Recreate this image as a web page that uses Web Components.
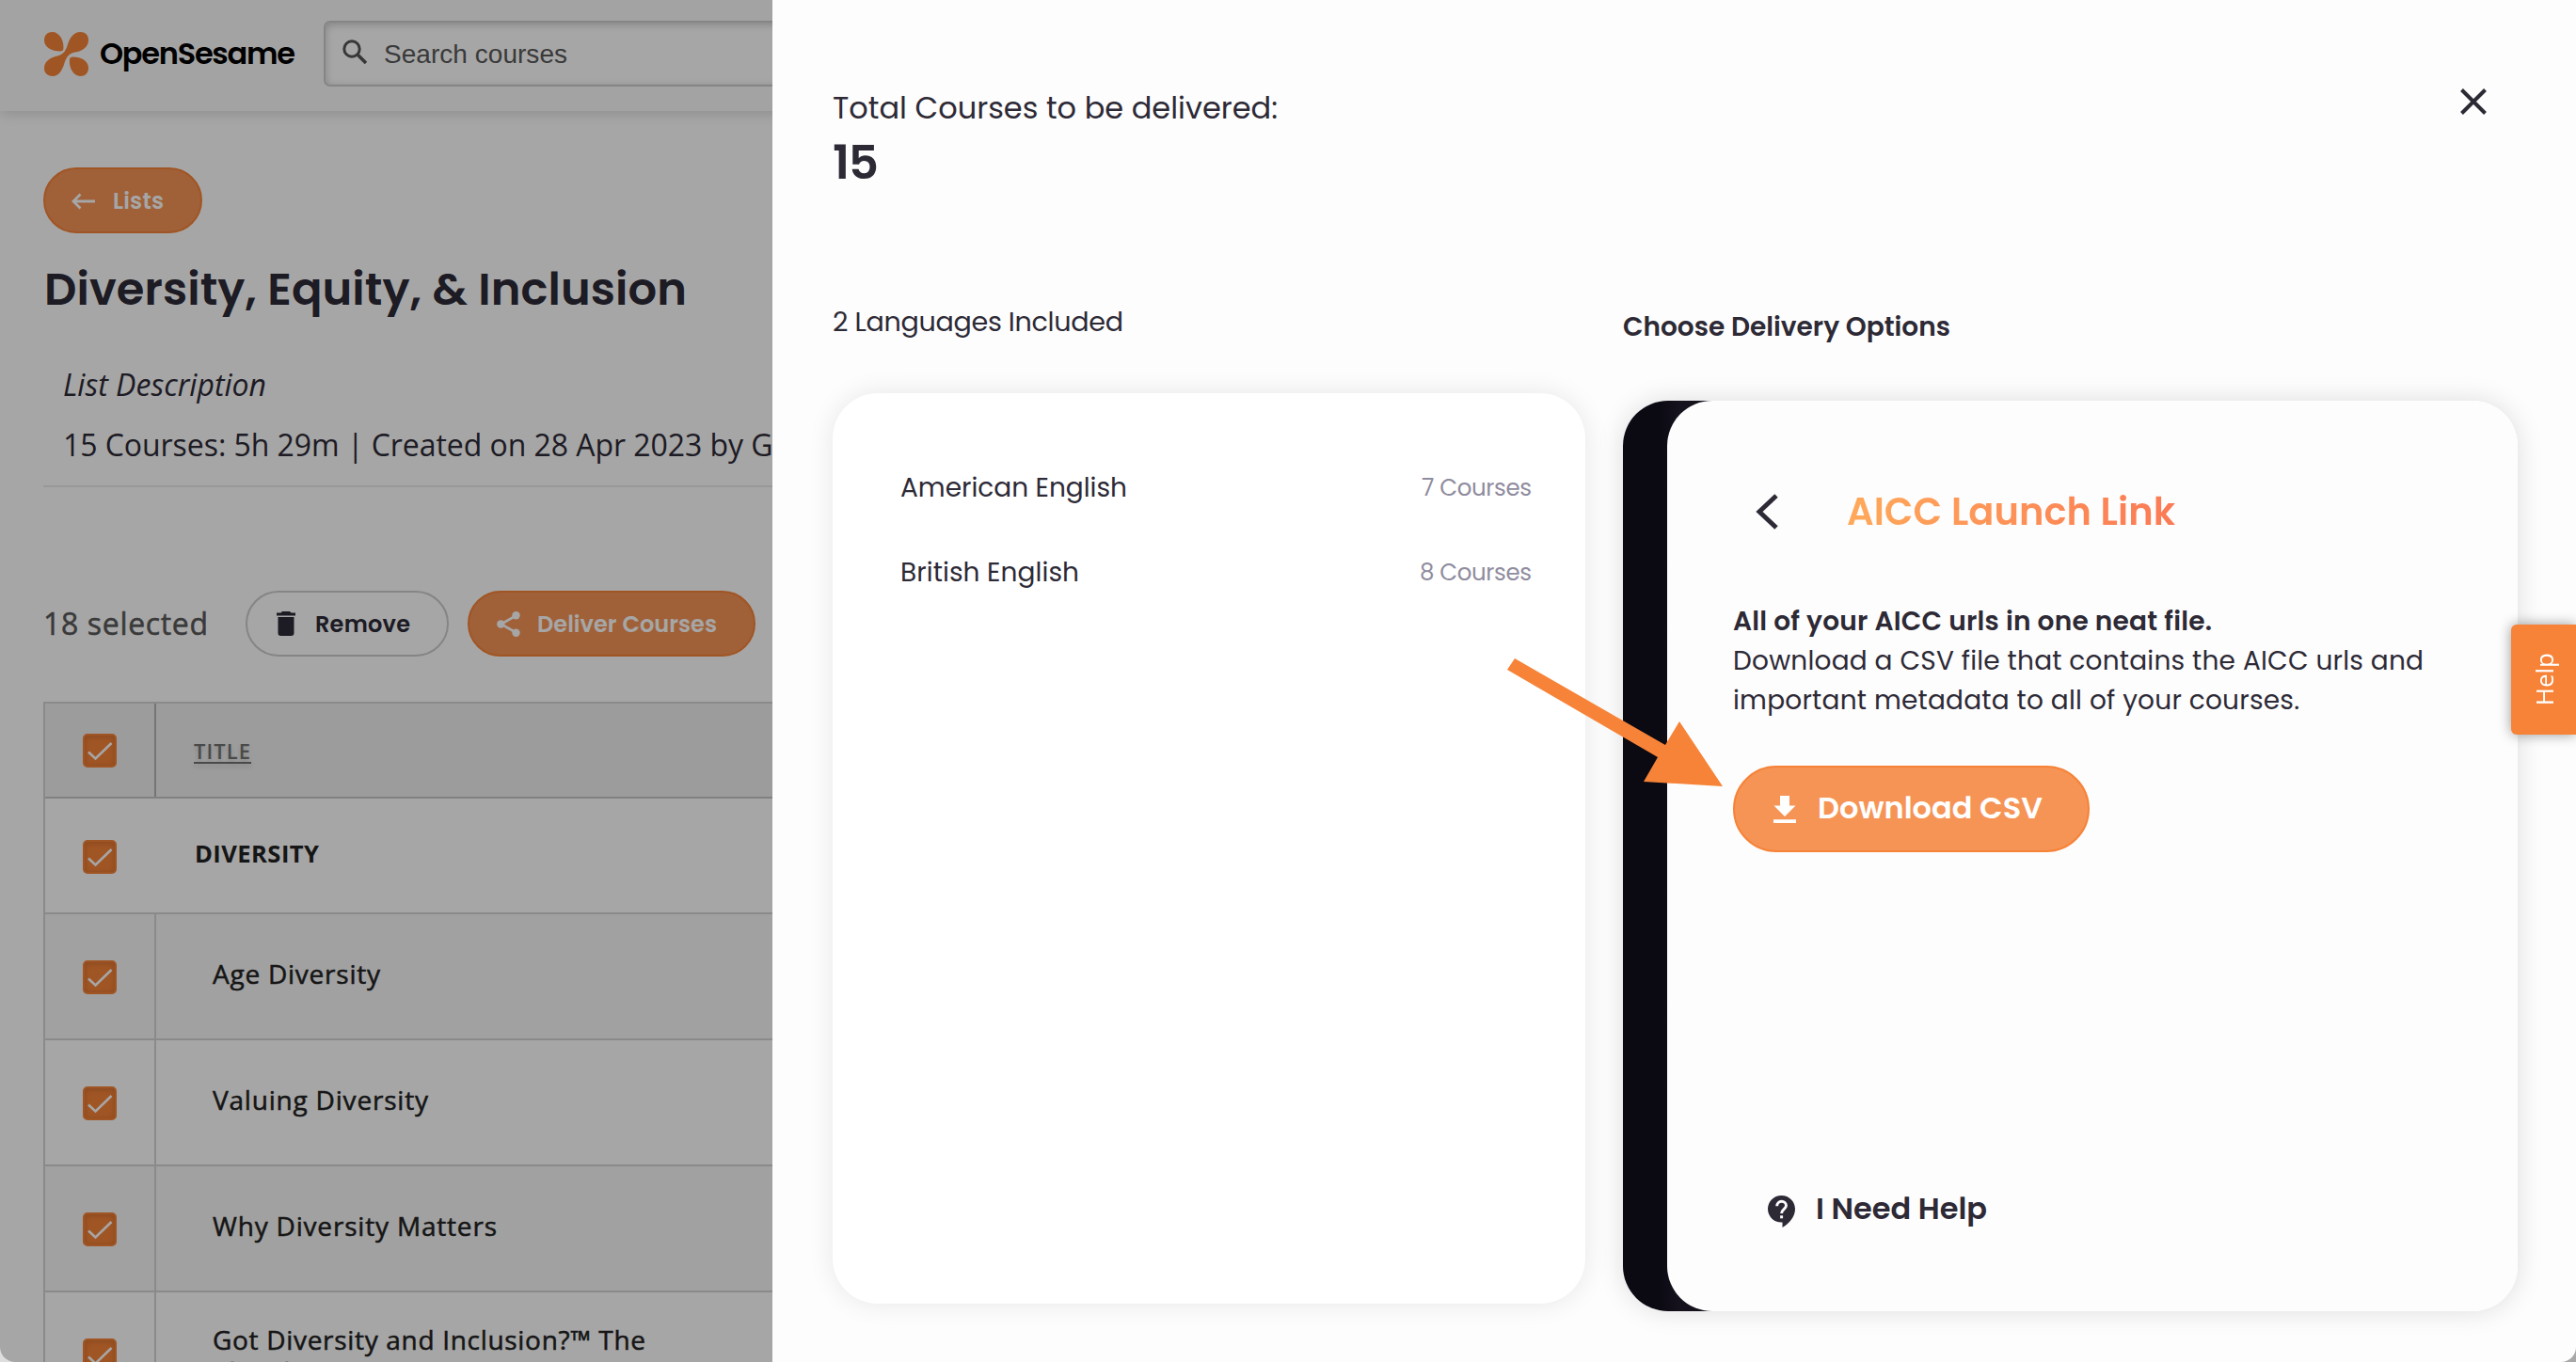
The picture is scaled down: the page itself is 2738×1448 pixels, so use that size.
<!DOCTYPE html>
<html lang="en">
<head>
<meta charset="utf-8">
<title>OpenSesame</title>
<style>
  html, body {
    margin: 0;
    height: 100%;
    overflow: hidden;
    background: linear-gradient(90deg, #dedede 50%, #a8a8a8 50%);
    font-family: Poppins, Inter, sans-serif;
    color: #2d2a36;
  }
</style>
</head>
<body>
<app-shell>
  <top-bar slot="page"></top-bar>
  <list-page slot="page"></list-page>
  <delivery-drawer slot="drawer">
    <language-row slot="languages" name="American English" w="241" count="7 Courses" cw="117"></language-row>
    <language-row slot="languages" name="British English" w="190" count="8 Courses" cw="119"></language-row>
  </delivery-drawer>
  <pointer-arrow slot="over"></pointer-arrow>
  <help-tab slot="over">Help</help-tab>
</app-shell>

<script>
/**
 * Creates a template element from a string.
 *
 * @param {string} html - The markup and styles.
 * @returns {HTMLTemplateElement} The template.
 */
const createTemplate = (html) => {
  const template = document.createElement('template')
  template.innerHTML = html
  return template
}

/**
 * Defines an element that only clones its template.
 *
 * @param {string} name - The tag name.
 * @param {string} html - The markup and styles.
 */
const defineStatic = (name, html) => {
  const template = createTemplate(html)
  customElements.define(name,
    class extends HTMLElement {
      /**
       * Creates an instance of the current type.
       */
      constructor () {
        super()
        this.attachShadow({ mode: 'open' })
          .appendChild(template.content.cloneNode(true))
      }
    }
  )
}

// The page, the dimming layer and the drawer on top of it.
defineStatic('app-shell', `
<style>
  :host {
    display: block;
    position: relative;
    height: 1448px;
    overflow: hidden;
    border-radius: 0 0 16px 16px;
    background: #fff;
  }
  .dim {
    position: absolute;
    inset: 0;
    background: rgba(0, 0, 0, 0.35);
  }
  .drawer {
    position: absolute;
    top: 0;
    right: 0;
    bottom: 0;
    left: 821px;
  }
</style>
<slot name="page"></slot>
<div class="dim"></div>
<div class="drawer"><slot name="drawer"></slot></div>
<slot name="over"></slot>
`)

defineStatic('top-bar', `
<style>
  :host {
    display: flex;
    align-items: center;
    position: relative;
    box-sizing: border-box;
    height: 118px;
    padding: 0 0 4px 47px;
    background: #fbfbfb;
    box-shadow: 0 2px 14px rgba(0, 0, 0, 0.16);
  }
  .logo {
    width: 47px;
    height: 47px;
    margin-right: 12px;
  }
  .name {
    width: 238px;
    font-size: 32px;
    font-weight: 600;
    color: #000;
  }
  .search {
    flex: 1;
    display: flex;
    align-items: center;
    box-sizing: border-box;
    height: 70px;
    padding-left: 18px;
    border: 2px solid #ccc;
    border-radius: 7px;
    background: #fff;
    box-shadow: inset 0 2px 8px rgba(0, 0, 0, 0.22);
    font-family: Helvetica, "Liberation Sans", sans-serif;
    font-size: 28px;
    color: #5a5a5a;
  }
  .search svg {
    width: 26px;
    height: 26px;
    margin: 0 18px 4px 0;
  }
  .search fit-text { padding-top: 2px; }
</style>
<svg class="logo" viewBox="0 0 140 140" fill="#f68338">
  <path d="M0 26C0 9 11 0 26 0C46 0 62 24 61 49C61 58 58 61 50 61C24 61 0 49 0 26Z"/>
  <path d="M140 114C140 131 129 140 114 140C94 140 79 116 80 91C80 82 83 79 91 79C117 79 140 91 140 114Z"/>
  <path d="M114 0C130 0 140 10 140 25C140 47 122 60 98 64C80 67 71 78 64 98C57 122 46 140 26 140C10 140 0 130 0 115C0 94 18 81 42 76C60 72 68 60 74 41C81 17 95 0 114 0Z"/>
</svg>
<div class="name"><fit-text w="208">OpenSesame</fit-text></div>
<div class="search">
  <svg viewBox="0 0 26 26" fill="none" stroke="#555" stroke-width="3"><circle cx="10" cy="10" r="8.2"/><path d="M15.5 15.5L25 25" stroke-width="3.6"/></svg>
  <fit-text w="195">Search courses</fit-text>
</div>
`)

defineStatic('pill-button', `
<style>
  :host {
    display: flex;
    align-items: center;
    box-sizing: border-box;
    height: 70px;
    border: 2px solid #f68338;
    border-radius: 35px;
    background: #f69456;
    font-size: 24px;
    font-weight: 600;
    color: #fff;
  }
  :host([plain]) {
    border-color: #ccc;
    background: #fff;
    color: #2d2a36;
  }
  :host([large]) {
    height: 92px;
    border-radius: 46px;
    font-size: 32px;
  }
</style>
<slot name="icon"></slot>
<slot></slot>
`)

defineStatic('check-box', `
<style>
  :host {
    display: block;
    box-sizing: border-box;
    width: 36px;
    height: 36px;
    border: 2px solid #f68338;
    border-radius: 5px;
    background: #f68338;
    box-shadow: inset 0 1px 6px rgba(0, 0, 0, 0.16);
  }
  svg { display: block; }
</style>
<svg width="32" height="32" viewBox="2 2 32 32" fill="none" stroke="#fff" stroke-width="2.6">
  <path d="M6 19.5L13.5 26.5L30.5 10"/>
</svg>
`)

defineStatic('table-row', `
<style>
  :host {
    display: flex;
    box-sizing: border-box;
    height: 134px;
    border-top: 2px solid #d4d4d4;
    font-size: 28px;
    font-weight: 500;
    line-height: 34px;
    color: #222;
    -webkit-text-stroke: 0.5px #222;
  }
  :host([shaded]) { background: #f8f8f8; }
  :host([head]) {
    height: 101px;
    background: #f0f0f0;
    font-size: 22px;
    font-weight: 600;
    color: #727272;
    -webkit-text-stroke: 0;
  }
  :host([group]) {
    height: 123px;
    border-top-color: #c6c6c6;
    font-size: 25.6px;
    font-weight: 700;
    -webkit-text-stroke: 0;
  }
  .check {
    display: flex;
    align-items: center;
    justify-content: center;
    box-sizing: border-box;
    width: 118px;
    padding-top: 2px;
    border-right: 2px solid #d4d4d4;
  }
  :host([head]) .check { padding-top: 0; border-right-color: #b4b4b4; }
  :host([group]) .check { border-right-color: transparent; }
  .title {
    flex: 1;
    display: flex;
    flex-direction: column;
    justify-content: center;
    align-items: flex-start;
    padding: 0 0 6px 60px;
  }
  :host([head]) .title { padding: 0 0 0 40px; }
  :host([group]) .title { padding: 0 0 3px 41px; }
  :host([tall]) .title { padding: 2px 0 0 60px; }
</style>
<div class="check"><check-box></check-box></div>
<div class="title"><slot></slot></div>
`)

defineStatic('list-page', `
<style>
  :host {
    display: block;
    padding: 60px 0 0 46px;
    font-family: "Open Sans", sans-serif;
  }
  pill-button { font-family: Poppins, Inter, sans-serif; }
  .back { width: 169px; }
  .back svg { margin: 2px 19px 0 28px; }
  h1 {
    margin: 31px 0 0 1px;
    font: 600 48px/58px Poppins, Inter, sans-serif;
  }
  .about {
    margin-top: 50px;
    padding-left: 21px;
    border-bottom: 2px solid #eaeaea;
    font-size: 32px;
    line-height: 44px;
  }
  .about i, .about span { display: block; }
  .about span { padding: 20px 0 21px; white-space: nowrap; }
  .tools {
    display: flex;
    align-items: center;
    margin-top: 110px;
  }
  .selected {
    width: 215px;
    padding-bottom: 1px;
    font-size: 32px;
    color: #595959;
    -webkit-text-stroke: 0.5px #595959;
  }
  .remove { width: 216px; margin-right: 20px; }
  .remove svg { margin: 0 21px 0 31px; }
  .deliver { width: 306px; }
  .deliver svg { margin: 0 18px 0 29px; }
  .table {
    margin-top: 48px;
    border-left: 2px solid #d4d4d4;
  }
  .sort {
    text-decoration: underline;
    text-decoration-thickness: 2px;
    text-underline-offset: 3px;
    text-shadow: 0 3px 5px rgba(0, 0, 0, 0.15);
  }
</style>
<pill-button class="back">
  <svg slot="icon" width="25" height="18" viewBox="0 0 25 18" fill="none" stroke="#fff" stroke-width="2.8"><path d="M25 9H2.5M9.5 1.5L2 9L9.5 16.5"/></svg>
  <fit-text w="54">Lists</fit-text>
</pill-button>
<h1><fit-text w="683">Diversity, Equity, &amp; Inclusion</fit-text></h1>
<div class="about">
  <i><fit-text w="216">List Description</fit-text></i>
  <span><fit-text w="723">15 Courses: 5h 29m | Created on 28 Apr 2023 by</fit-text> G</span>
</div>
<div class="tools">
  <div class="selected"><fit-text w="175">18 selected</fit-text></div>
  <pill-button class="remove" plain>
    <svg slot="icon" width="20" height="26" viewBox="0 0 20 26" fill="#2d2a36"><path d="M6 0h8l1.500 1.500H20V4.500H0V1.500H4.500zM1.500 6h17v17a3 3 0 0 1-3 3h-11a3 3 0 0 1-3-3z"/></svg>
    <fit-text w="101">Remove</fit-text>
  </pill-button>
  <pill-button class="deliver">
    <svg slot="icon" width="25" height="27" viewBox="0 0 25 27" fill="#fff"><path d="M20.500 4.500L4.500 13.500L20.500 22.500" fill="none" stroke="#fff" stroke-width="2.600"/><circle cx="20.500" cy="4.300" r="4.200"/><circle cx="4.300" cy="13.500" r="4.200"/><circle cx="20.500" cy="22.700" r="4.200"/></svg>
    <fit-text w="191">Deliver Courses</fit-text>
  </pill-button>
</div>
<div class="table">
  <table-row head><fit-text class="sort" w="60">TITLE</fit-text></table-row>
  <table-row group><fit-text w="132">DIVERSITY</fit-text></table-row>
  <table-row shaded><fit-text w="178">Age Diversity</fit-text></table-row>
  <table-row><fit-text w="229">Valuing Diversity</fit-text></table-row>
  <table-row shaded><fit-text w="302">Why Diversity Matters</fit-text></table-row>
  <table-row tall><fit-text w="460">Got Diversity and Inclusion?™ The</fit-text><fit-text w="96">Already</fit-text></table-row>
</div>
`)

defineStatic('delivery-drawer', `
<style>
  :host {
    display: block;
    box-sizing: border-box;
    height: 100%;
    padding: 91px 62px 0 64px;
    background: #fdfdfd;
  }
  header {
    display: flex;
    justify-content: space-between;
    align-items: flex-start;
    height: 112px;
    padding-right: 33px;
  }
  .label { font-size: 32px; line-height: 48px; }
  .total { margin-top: 4px; font-size: 50px; font-weight: 600; line-height: 60px; }
  header svg { margin-top: 3px; }
  .columns {
    display: grid;
    grid-template-columns: 800px 951px;
    column-gap: 40px;
    margin-top: 119px;
  }
  .caption { font-size: 28.6px; line-height: 40px; }
  .caption.bold { margin-top: 6px; font-size: 28px; font-weight: 600; }
  .languages {
    box-sizing: border-box;
    height: 968px;
    margin-top: 56px;
    padding: 81px 57px 0 72px;
    border-radius: 48px;
    background: #fff;
    box-shadow: 0 0 28px rgba(0, 0, 0, 0.09);
  }
  .options {
    box-sizing: border-box;
    height: 968px;
    margin-top: 58px;
    padding-left: 47px;
    border-radius: 48px;
    background: linear-gradient(90deg, #0b0912 38px, #15121d 60px, #15121d 110px, #fdfdfd 110px);
    box-shadow: 0 0 28px rgba(0, 0, 20, 0.13);
  }
</style>
<header>
  <div>
    <div class="label"><fit-text w="473">Total Courses to be delivered:</fit-text></div>
    <div class="total"><fit-text w="49">15</fit-text></div>
  </div>
  <svg width="28" height="28" viewBox="0 0 28 28" stroke="#2d2a36" stroke-width="4"><path d="M1.500 1.500L26.500 26.500M26.500 1.500L1.500 26.500"/></svg>
</header>
<div class="columns">
  <section>
    <div class="caption"><fit-text w="309">2 Languages Included</fit-text></div>
    <div class="languages"><slot name="languages"></slot></div>
  </section>
  <section>
    <div class="caption bold"><fit-text w="348">Choose Delivery Options</fit-text></div>
    <div class="options"><launch-card></launch-card></div>
  </section>
</div>
`)

defineStatic('launch-card', `
<style>
  :host {
    display: flex;
    flex-direction: column;
    align-items: flex-start;
    box-sizing: border-box;
    height: 100%;
    padding: 93px 90px 84px 70px;
    border-radius: 48px;
    background: #fdfdfd;
  }
  .head { display: flex; align-items: center; height: 48px; }
  .head svg { margin: 2px 73px 0 24px; }
  .head fit-text {
    padding-top: 1px;
    font-size: 40px;
    font-weight: 600;
    color: transparent;
    background: linear-gradient(90deg, #ffa95a, #fb7a55);
    -webkit-background-clip: text;
    background-clip: text;
  }
  p { margin: 73px 0 48px; font-size: 28px; line-height: 42px; }
  p > * { display: block; }
  b { font-weight: 600; }
  pill-button { width: 379px; }
  pill-button svg { margin: 0 23px 0 41px; }
  pill-button fit-text { padding-bottom: 2px; }
  .help {
    display: flex;
    align-items: center;
    height: 48px;
    margin: auto 0 0 37px;
    font-size: 32px;
    font-weight: 600;
  }
  .help svg { margin: 4px 21px 0 0; }
  .help fit-text { padding-bottom: 2px; }
</style>
<div class="head">
  <svg width="24" height="38" viewBox="0 0 24 38" fill="none" stroke="#2d2a36" stroke-width="5"><path d="M22 2L4 19L22 36"/></svg>
  <fit-text w="349">AICC Launch Link</fit-text>
</div>
<p>
  <b><fit-text w="509">All of your AICC urls in one neat file.</fit-text></b>
  <span><fit-text w="734">Download a CSV file that contains the AICC urls and</fit-text></span>
  <span><fit-text w="602">important metadata to all of your courses.</fit-text></span>
</p>
<pill-button large>
  <svg slot="icon" width="24" height="29" viewBox="0 0 24 29" fill="#fff"><path d="M7 0h10v10.500h6.500L12 22L.5 10.500H7zM0 25.300h24V29H0z"/></svg>
  <fit-text w="239">Download CSV</fit-text>
</pill-button>
<div class="help">
  <svg width="30" height="34" viewBox="0 0 30 34"><path d="M14.500 0C22.700 0 29 6.300 29 14.300C29 22.500 23 29.500 15.500 34V28.600H14.500C6.300 28.600 0 22.300 0 14.300C0 6.300 6.300 0 14.500 0Z" fill="#2d2a36"/><path d="M9.700 11.300C9.700 8.300 11.800 6.300 14.600 6.300C17.400 6.300 19.500 8.200 19.500 10.800C19.500 14.200 14.600 14.600 14.600 19" fill="none" stroke="#fdfdfd" stroke-width="2.900"/><path d="M13.100 21.300h3v3h-3z" fill="#fdfdfd"/></svg>
  <fit-text w="182">I Need Help</fit-text>
</div>
`)

// Orange arrow that points at the download button.
defineStatic('pointer-arrow', `
<style>
  :host { position: absolute; left: 1602px; top: 700px; }
  svg { display: block; }
</style>
<svg width="229" height="137" viewBox="0 0 229 137" fill="#f68338"><path d="M8 0L168 92L183 67L229 136L145 131L160 105L0 12Z"/></svg>
`)

defineStatic('help-tab', `
<style>
  :host {
    position: absolute;
    right: 0;
    top: 664px;
    display: flex;
    align-items: center;
    justify-content: center;
    width: 69px;
    height: 117px;
    border-radius: 6px 0 0 6px;
    background: #f68338;
    box-shadow: 0 0 14px rgba(0, 0, 0, 0.4);
    font: 26px "Open Sans", sans-serif;
    color: #fff;
  }
  span { writing-mode: vertical-rl; transform: rotate(180deg); }
</style>
<span><slot></slot></span>
`)

customElements.define('language-row',
  /**
   * Represents one language and its number of courses.
   */
  class extends HTMLElement {
    /**
     * Called after the element is inserted into the DOM.
     */
    connectedCallback () {
      this.attachShadow({ mode: 'open' }).innerHTML = `
<style>
  :host {
    display: flex;
    justify-content: space-between;
    align-items: center;
    height: 40px;
    margin-bottom: 50px;
    font-size: 28px;
  }
  .count { padding-bottom: 2px; font-size: 24.5px; color: #8f8c9e; }
</style>
<fit-text w="${this.getAttribute('w')}">${this.getAttribute('name')}</fit-text>
<fit-text class="count" w="${this.getAttribute('cw')}">${this.getAttribute('count')}</fit-text>
`
    }
  }
)

customElements.define('fit-text',
  /**
   * A single line of text, tracked to fill the width in its w attribute.
   */
  class extends HTMLElement {
    /**
     * Creates an instance of the current type.
     */
    constructor () {
      super()
      this.attachShadow({ mode: 'open' }).innerHTML =
        '<style>:host { display: inline-block; white-space: nowrap; }</style><slot></slot>'
    }

    /**
     * Called after the element is inserted into the DOM.
     */
    connectedCallback () {
      const natural = this.getBoundingClientRect().width
      const gaps = this.textContent.length - 1
      const spacing = (Number(this.getAttribute('w')) - natural) / gaps
      this.style.letterSpacing = `${spacing.toFixed(3)}px`
      this.style.marginRight = `${(-spacing).toFixed(3)}px`
    }
  }
)
</script>
</body>
</html>
